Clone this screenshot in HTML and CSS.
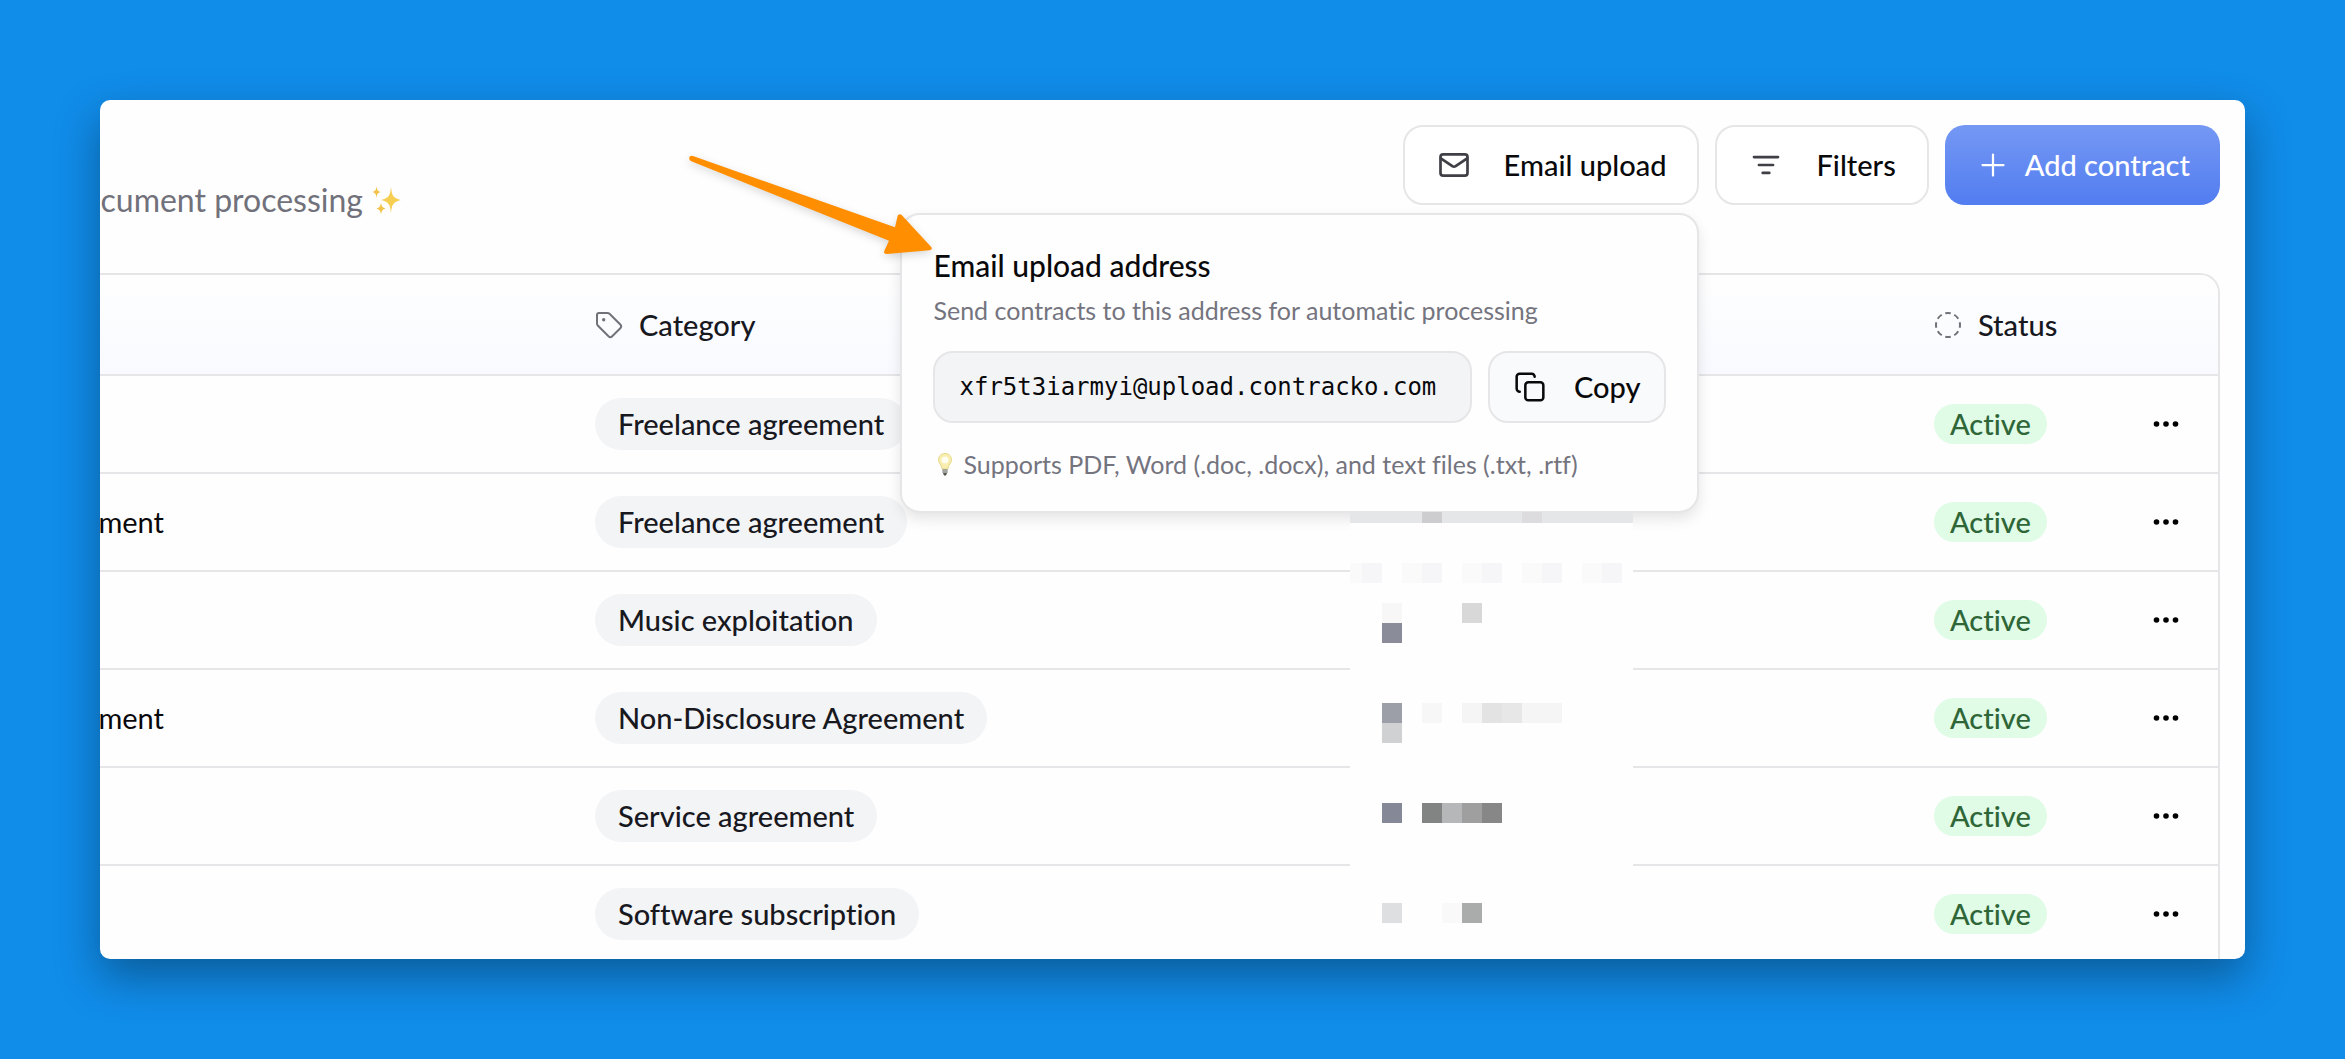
FILE: index.html
```html
<!DOCTYPE html>
<html lang="en">
<head>
    <meta charset="UTF-8">
    <meta name="viewport" content="width=device-width, initial-scale=1.0">
    <title>Contracts</title>
    <link rel="stylesheet" href="styles.css">
</head>
<body>
<!-- shared icons -->
<svg class="sprite" aria-hidden="true">
    <symbol id="dots" viewBox="0 0 28 28">
        <circle cx="4.5" cy="14" r="2.8"/><circle cx="14" cy="14" r="2.8"/><circle cx="23.5" cy="14" r="2.8"/>
    </symbol>
</svg>

<main class="card">
    <header class="header">
        <p class="subtitle">
            <span>document processing</span>
            <svg class="sparkles" viewBox="0 0 30 30" aria-hidden="true">
                <path fill="#f6cf52" d="M19 1.500C19.800 10.500 21 13 29 15C21 17 19.800 19.500 19 28.500C18.200 19.500 17 17 9 15C17 13 18.200 10.500 19 1.500Z"/>
                <path fill="#f2c246" d="M4.500 1C5 5 5.500 6 8.500 7C5.500 8 5 9 4.500 13C4 9 3.500 8 .500 7C3.500 6 4 5 4.500 1ZM9 17.500C9.600 21.500 10.500 22.500 13.500 23.500C10.500 24.500 9.600 25.500 9 29.500C8.400 25.500 7.500 24.500 4.500 23.500C7.500 22.500 8.400 21.500 9 17.500Z"/>
            </svg>
        </p>
        <div class="actions">
            <div class="dropdown">
                <button type="button" class="btn" id="emailBtn" aria-expanded="true">
                    <svg class="icon" viewBox="0 0 24 24"><rect x="3" y="4.900" width="18" height="14.200" rx="1.800"/><path d="M3.200 7.600L10.900 12.800Q12 13.500 13.100 12.800L20.800 7.600"/></svg>
                    Email upload
                </button>
                <section class="popup" id="popup">
                    <h2>Email upload address</h2>
                    <label class="desc" for="address">Send contracts to this address for automatic processing</label>
                    <div class="copy-row">
                        <input type="text" id="address" class="address" value="xfr5t3iarmyi@upload.contracko.com" readonly>
                        <button type="button" class="btn btn-copy" id="copyBtn">
                            <svg class="icon" viewBox="0 0 24 24"><rect x="8.500" y="8.500" width="13.500" height="13.500" rx="2.200"/><path d="M4.300 15.500C3 15.500 2 14.500 2 13.300V4.200C2 3 3 2 4.200 2H13.300C14.500 2 15.500 3 15.500 4.300"/></svg>
                            Copy
                        </button>
                    </div>
                    <p class="tip">
                        <svg class="bulb" viewBox="0 0 24 24" aria-hidden="true">
                            <path fill="#f7eeb0" stroke="#e6d887" d="M12 1.500C8 1.500 5.500 4.300 5.500 7.800C5.500 11.200 8.600 12.500 9.200 17H14.800C15.400 12.500 18.500 11.200 18.500 7.800C18.500 4.300 16 1.500 12 1.500Z"/>
                            <circle cx="12" cy="8" r="3.500" fill="#fffdf0"/>
                            <path fill="#a5a5a0" d="M9.300 17H14.700V21H9.300Z"/><path fill="#55554f" d="M10 21H14L13 23.500H11Z"/>
                        </svg>
                        Supports PDF, Word (.doc, .docx), and text files (.txt, .rtf)
                    </p>
                </section>
            </div>
            <button type="button" class="btn">
                <svg class="icon" viewBox="0 0 24 24"><path d="M4 6.700H20M7.300 12H16.700M9.800 17.300H14.200"/></svg>
                Filters
            </button>
            <button type="button" class="btn btn-primary">
                <svg class="icon" viewBox="0 0 24 24"><path d="M12 5V19M5 12H19"/></svg>
                Add contract
            </button>
        </div>
    </header>

    <div class="table-wrap">
        <table>
            <thead>
                <tr>
                    <th class="col-name"></th>
                    <th class="col-category">
                        <span class="th-label">
                            <svg class="th-icon" viewBox="0 0 28 28"><path d="M2 4V12.500C2 13.500 2.300 14 3 14.800L13.500 25.300C14.800 26.500 16 26.500 17.200 25.300L25.300 17.200C26.500 16 26.500 14.800 25.300 13.500L14.800 3C14 2.300 13.500 2 12.500 2H4Q2 2 2 4Z"/><circle class="fill" cx="8.700" cy="8.700" r="1.700"/></svg>
                            Category
                        </span>
                    </th>
                    <th></th>
                    <th class="col-status">
                        <span class="th-label">
                            <svg class="th-icon" viewBox="0 0 28 28"><circle cx="14" cy="14" r="12" pathLength="80" stroke-dasharray="6 4" stroke-dashoffset="3"/></svg>
                            Status
                        </span>
                    </th>
                    <th class="col-menu"></th>
                </tr>
            </thead>
            <tbody>
                <tr>
                    <td></td>
                    <td><span class="tag">Freelance agreement</span></td>
                    <td></td>
                    <td><span class="status">Active</span></td>
                    <td><button type="button" class="menu" aria-label="Row actions"><svg><use href="#dots"/></svg></button></td>
                </tr>
                <tr>
                    <td><span class="name">Agreement</span></td>
                    <td><span class="tag">Freelance agreement</span></td>
                    <td></td>
                    <td><span class="status">Active</span></td>
                    <td><button type="button" class="menu" aria-label="Row actions"><svg><use href="#dots"/></svg></button></td>
                </tr>
                <tr>
                    <td></td>
                    <td><span class="tag">Music exploitation</span></td>
                    <td></td>
                    <td><span class="status">Active</span></td>
                    <td><button type="button" class="menu" aria-label="Row actions"><svg><use href="#dots"/></svg></button></td>
                </tr>
                <tr>
                    <td><span class="name">Agreement</span></td>
                    <td><span class="tag">Non-Disclosure Agreement</span></td>
                    <td></td>
                    <td><span class="status">Active</span></td>
                    <td><button type="button" class="menu" aria-label="Row actions"><svg><use href="#dots"/></svg></button></td>
                </tr>
                <tr>
                    <td></td>
                    <td><span class="tag">Service agreement</span></td>
                    <td></td>
                    <td><span class="status">Active</span></td>
                    <td><button type="button" class="menu" aria-label="Row actions"><svg><use href="#dots"/></svg></button></td>
                </tr>
                <tr>
                    <td></td>
                    <td><span class="tag">Software subscription</span></td>
                    <td></td>
                    <td><span class="status">Active</span></td>
                    <td><button type="button" class="menu" aria-label="Row actions"><svg><use href="#dots"/></svg></button></td>
                </tr>
            </tbody>
        </table>
    </div>

    <!-- pixelated block over the private column -->
    <svg class="redaction" viewBox="0 0 283 445" shape-rendering="crispEdges" aria-hidden="true">
        <rect width="283" height="445" fill="#fefefe"/>
        <rect width="283" height="11" fill="#e5e6e8"/>
        <rect x="72" width="20" height="11" fill="#cdcdd0"/>
        <rect x="172" width="20" height="11" fill="#dcdcde"/>
        <path fill="#fafafb" d="M0 51h12v20H0zM52 51h20v20H52zM112 51h20v20H112zM172 51h20v20H172zM232 51h20v20H232z"/>
        <path fill="#f6f6f9" d="M12 51h20v20H12zM72 51h20v20H72zM132 51h20v20H132zM192 51h20v20H192zM252 51h20v20H252z"/>
        <rect x="32" y="91" width="20" height="20" fill="#f7f7f8"/>
        <rect x="112" y="91" width="20" height="20" fill="#d8d8d8"/>
        <rect x="32" y="111" width="20" height="20" fill="#8b8c9a"/>
        <rect x="32" y="191" width="20" height="20" fill="#9c9fa8"/>
        <rect x="72" y="191" width="20" height="20" fill="#f7f7f7"/>
        <rect x="112" y="191" width="20" height="20" fill="#f5f5f5"/>
        <rect x="132" y="191" width="20" height="20" fill="#e3e3e3"/>
        <rect x="152" y="191" width="20" height="20" fill="#e7e7e7"/>
        <rect x="172" y="191" width="40" height="20" fill="#f5f5f5"/>
        <rect x="32" y="211" width="20" height="20" fill="#d0d1d2"/>
        <rect x="32" y="291" width="20" height="20" fill="#858997"/>
        <rect x="72" y="291" width="20" height="20" fill="#828484"/>
        <rect x="92" y="291" width="20" height="20" fill="#b6b7b9"/>
        <rect x="112" y="291" width="20" height="20" fill="#9f9fa0"/>
        <rect x="132" y="291" width="20" height="20" fill="#868786"/>
        <rect x="32" y="391" width="20" height="20" fill="#dedfe0"/>
        <rect x="92" y="391" width="20" height="20" fill="#f9f9f9"/>
        <rect x="112" y="391" width="20" height="20" fill="#aaacac"/>
    </svg>

    <svg class="arrow" viewBox="0 0 780 360" aria-hidden="true">
        <path d="M39 48L645 262L653 227Q657 219 665 225L753 320Q760 328 749 331L621 342Q609 341 613 332L627 302L32 63Q25 57 29 50Q33 46 39 48Z"/>
    </svg>
</main>

<script>
    const popup = document.getElementById("popup");
    const emailBtn = document.getElementById("emailBtn");
    const address = document.getElementById("address");

    emailBtn.addEventListener("click", () => {
        popup.hidden = !popup.hidden;
        emailBtn.setAttribute("aria-expanded", String(!popup.hidden));
    });

    document.getElementById("copyBtn").addEventListener("click", () => {
        address.select();
        document.execCommand("copy");
    });
</script>
</body>
</html>
```

FILE: styles.css
```css
* {
    box-sizing: border-box;
}

body {
    margin: 0;
    padding: 100px;
    height: 100vh;
    background-color: #108ce9;
    font-family: Lato, "Noto Sans", sans-serif;
    font-size: 29px;
    font-variant-ligatures: none;
    color: #09090b;
}

.sprite {
    display: none;
}

.card {
    position: relative;
    height: 100%;
    overflow: hidden;
    background-color: #fefefe;
    border-radius: 10px;
    box-shadow: 0 18px 44px rgba(0, 0, 0, 0.34);
}

/* header */
.header {
    display: flex;
    justify-content: space-between;
    align-items: flex-start;
    padding: 25px 25px 0 0;
}

.subtitle {
    display: flex;
    align-items: center;
    justify-content: flex-end;
    gap: 9px;
    width: 302px;
    margin: 0;
    padding: 55px 0 53px;
    font-size: 32px;
    line-height: 40px;
    color: #71717b;
    white-space: nowrap;
}

.sparkles {
    width: 30px;
    height: 30px;
    flex: none;
}

.actions {
    display: flex;
    gap: 16px;
}

.btn {
    display: flex;
    align-items: center;
    gap: 32px;
    height: 80px;
    padding: 0 31px;
    border: 2px solid #e6e6e8;
    border-radius: 20px;
    background-color: #fff;
    color: #09090b;
    font-family: inherit;
    font-size: 29px;
    font-weight: 500;
    font-variant-ligatures: none;
    line-height: 36px;
    white-space: nowrap;
    cursor: pointer;
}

.icon {
    width: 36px;
    height: 36px;
    flex: none;
    fill: none;
    stroke: #3f3f46;
    stroke-width: 1.8;
    stroke-linecap: round;
    stroke-linejoin: round;
}

.btn-primary {
    gap: 14px;
    padding: 0 30px;
    border: 0;
    background: linear-gradient(#7598f4, #527df0);
    color: #fff;
}
.btn-primary .icon {
    stroke: #fff;
    stroke-width: 1.5;
}

/* email upload popup */
.dropdown {
    position: relative;
}

.popup {
    position: absolute;
    top: 88px;
    right: 0;
    z-index: 2;
    width: 799px;
    padding: 31px;
    border: 2px solid #e6e6e8;
    border-radius: 20px;
    background-color: #fefefe;
    box-shadow: 0 6px 14px rgba(0, 0, 0, 0.1);
}
.popup h2 {
    margin: 0 0 10px;
    font-size: 30px;
    font-weight: 500;
    line-height: 38px;
}

.desc,
.tip {
    font-size: 25px;
    line-height: 32px;
    color: #74747e;
}
.desc {
    display: block;
}
.tip {
    display: flex;
    align-items: center;
    gap: 6px;
    margin: 0;
}

.bulb {
    width: 24px;
    height: 24px;
    flex: none;
}

.copy-row {
    display: flex;
    gap: 16px;
    margin: 25px 0;
}

.address {
    flex: 1;
    min-width: 0;
    height: 72px;
    padding: 0 24px;
    border: 2px solid #e6e6e8;
    border-radius: 20px;
    background-color: #f3f4f6;
    color: #09090b;
    font-family: "DejaVu Sans Mono", monospace;
    font-size: 24px;
}

.btn-copy {
    gap: 28px;
    height: 72px;
    padding: 0 24px;
    background-color: #f9fafc;
}
.btn-copy .icon {
    width: 32px;
    height: 32px;
    stroke: #09090b;
    stroke-width: 1.9;
}

/* table */
.table-wrap {
    margin-right: 25px;
    border: 2px solid #e6e6e8;
    border-left: 0;
    border-radius: 0 20px 0 0;
    overflow: hidden;
}

table {
    width: 100%;
    table-layout: fixed;
    border-collapse: separate;
    border-spacing: 0;
}

th,
td {
    height: 98px;
    padding: 0 24px;
    border-bottom: 2px solid #e6e6e8;
    text-align: left;
    line-height: 36px;
    white-space: nowrap;
}
th {
    height: 101px;
    font-weight: 500;
    color: #18181f;
}
thead {
    background: linear-gradient(#fefefe, #f8faff);
}

.col-name {
    width: 471px;
}
.col-category {
    width: 779px;
}
.col-status {
    width: 204px;
}
.col-menu {
    width: 104px;
}

.th-label {
    display: flex;
    align-items: center;
    gap: 16px;
}

.th-icon {
    width: 28px;
    height: 28px;
    flex: none;
    fill: none;
    stroke: #71717a;
    stroke-width: 2;
}
.th-icon .fill {
    fill: #71717a;
    stroke: none;
}

td:first-child {
    padding-left: 0;
}

.name {
    display: flex;
    justify-content: flex-end;
    width: 64px;
}

.tag,
.status {
    display: block;
    width: fit-content;
    border-radius: 26px;
    font-weight: 500;
}
.tag {
    padding: 0 23px;
    background-color: #f3f4f6;
    color: #18181f;
    line-height: 52px;
}
.status {
    padding: 0 16px;
    background-color: #e0fbe6;
    color: #2f6638;
    line-height: 40px;
}

.menu {
    display: block;
    width: 28px;
    height: 28px;
    margin: 0 auto;
    padding: 0;
    border: 0;
    background: none;
    cursor: pointer;
}
.menu svg {
    display: block;
    width: 28px;
    height: 28px;
}

/* annotations laid over the page */
.redaction,
.arrow {
    position: absolute;
    z-index: 3;
    pointer-events: none;
}
.redaction {
    top: 412px;
    right: 612px;
    width: 283px;
    height: 445px;
}
.arrow {
    top: 40px;
    right: 1305px;
    width: 260px;
    height: 120px;
    fill: #ff8f00;
    filter: drop-shadow(0 3px 4px rgba(0, 0, 0, 0.15));
}
```
